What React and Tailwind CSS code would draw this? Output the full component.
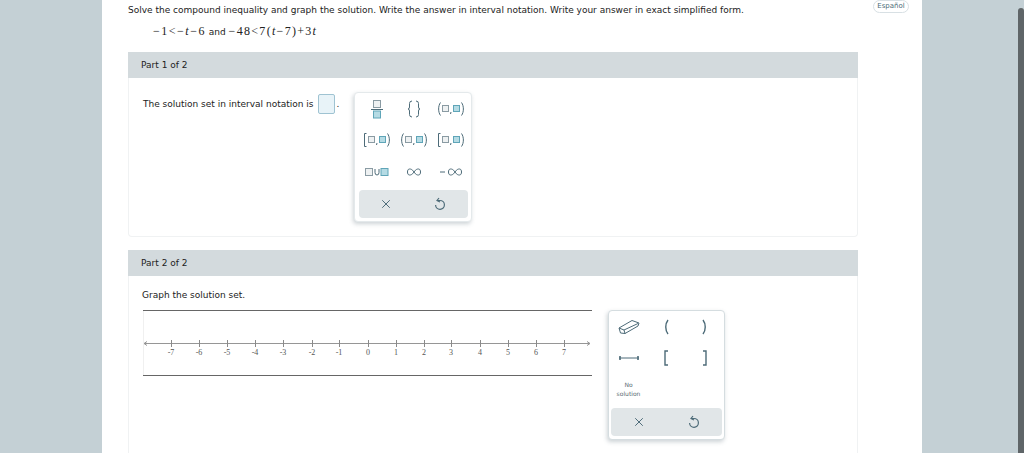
import { X } from 'lucide-react'

const ink = '#4d6b78'

function Box({ x, y, size = 7, fill }) {
  return (
    <rect
      x={x}
      y={y}
      width={size}
      height={size}
      fill={fill ? '#b5dbe4' : '#eef1f2'}
      stroke={fill ? '#5fa5b8' : '#8a9ba3'}
      strokeWidth="1"
    />
  )
}

// bracket pair with two boxes: left and right are the bracket characters
function Interval({ left, right }) {
  const drawSide = (kind, side) => {
    const x = side === 'l' ? 0.5 : 25.5
    const dir = side === 'l' ? 1 : -1
    if (kind === '[') {
      return <path d={`M${x + 2 * dir} 1.5 H${x} V14.5 H${x + 2 * dir}`} fill="none" stroke={ink} strokeWidth="1" />
    }
    return <path d={`M${x + 2 * dir} 1.5 C${x - 0.5 * dir} 5 ${x - 0.5 * dir} 11 ${x + 2 * dir} 14.5`} fill="none" stroke={ink} strokeWidth="1" />
  }
  return (
    <svg width="26" height="16" viewBox="0 0 26 16">
      {drawSide(left, 'l')}
      <Box x={4.5} y={4.5} size={6} />
      <path d="M13 11 L12.5 13" stroke={ink} strokeWidth="1" />
      <Box x={15.5} y={4.5} size={6} fill />
      {drawSide(right, 'r')}
    </svg>
  )
}

function Fraction() {
  return (
    <svg width="14" height="20" viewBox="0 0 14 20">
      <Box x={3.5} y={1.5} size={7} />
      <path d="M1 10.5 H13" stroke={ink} strokeWidth="1" />
      <Box x={3.5} y={12} size={7} fill />
    </svg>
  )
}

function Braces() {
  return (
    <svg width="14" height="18" viewBox="0 0 14 18">
      <path d="M5 1 Q2.5 1 2.5 3.5 V7 Q2.5 9 1 9 Q2.5 9 2.5 11 V14.5 Q2.5 17 5 17" fill="none" stroke={ink} strokeWidth="1" />
      <path d="M9 1 Q11.5 1 11.5 3.5 V7 Q11.5 9 13 9 Q11.5 9 11.5 11 V14.5 Q11.5 17 9 17" fill="none" stroke={ink} strokeWidth="1" />
    </svg>
  )
}

function Union() {
  return (
    <svg width="24" height="10" viewBox="0 0 24 10">
      <Box x={0.5} y={1.5} />
      <path d="M10 2 V5.5 Q10 8 12 8 Q14 8 14 5.5 V2" fill="none" stroke={ink} strokeWidth="1" />
      <Box x={16} y={1.5} fill />
    </svg>
  )
}

function Infinity2({ minus }) {
  return (
    <svg width={minus ? 22 : 14} height="10" viewBox={minus ? '0 0 22 10' : '0 0 14 10'}>
      {minus && <path d="M0 5 H5" stroke={ink} strokeWidth="1" />}
      <path
        transform={minus ? 'translate(8 0)' : undefined}
        d="M7 5 C5 2 3.5 2 2.5 2 C1 2 0.5 3.5 0.5 5 C0.5 6.5 1 8 2.5 8 C3.5 8 5 8 7 5 C9 2 10.5 2 11.5 2 C13 2 13.5 3.5 13.5 5 C13.5 6.5 13 8 11.5 8 C10.5 8 9 8 7 5 Z"
        fill="none"
        stroke={ink}
        strokeWidth="1"
      />
    </svg>
  )
}

function Eraser() {
  return (
    <svg width="22" height="16" viewBox="0 0 22 16">
      <path d="M1 9 L14 1.5 L21 4 L20 7 L7 14.5 L2.5 14 Z M1 9 L6 11 L7 14.5 M6 11 L20 4.5" fill="none" stroke={ink} strokeWidth="1" strokeLinejoin="round" />
    </svg>
  )
}

function Segment() {
  return (
    <svg width="22" height="8" viewBox="0 0 22 8">
      <path d="M1 4 H21" stroke={ink} strokeWidth="1" />
      <path d="M1 2 L3 4 L1 6 M3 2 L1 4 L3 6 M21 2 L19 4 L21 6 M19 2 L21 4 L19 6" fill="none" stroke={ink} strokeWidth="0.8" />
    </svg>
  )
}

function Paren({ kind }) {
  const paths = {
    '(': 'M5 1 C2 5 2 11 5 15',
    ')': 'M1 1 C4 5 4 11 1 15',
    '[': 'M5 1 H2 V15 H5',
    ']': 'M1 1 H4 V15 H1',
  }
  return (
    <svg width="6" height="16" viewBox="0 0 6 16">
      <path d={paths[kind]} fill="none" stroke={ink} strokeWidth="1.4" />
    </svg>
  )
}

function Undo() {
  return (
    <svg width="12" height="14" viewBox="0 0 12 14">
      <path d="M5 1 L3 3.5 L6 5 M3 3.5 H6 A4.4 4.4 0 1 1 1.6 8" fill="none" stroke={ink} strokeWidth="1.2" />
    </svg>
  )
}

function KeyFooter() {
  return (
    <div className="h-7 bg-[#e1e6e8] rounded-sm grid grid-cols-2 items-center justify-items-center text-[#4d6b78]">
      <X size={14} strokeWidth={1.7} />
      <Undo />
    </div>
  )
}

function Cell({ children }) {
  return <div className="h-[31.5px] flex items-center justify-center">{children}</div>
}

function NumberLine() {
  const ticks = [
    [-7, 28], [-6, 56], [-5, 84], [-4, 112], [-3, 140], [-2, 169], [-1, 196], [0, 225],
    [1, 253], [2, 281], [3, 308], [4, 337], [5, 365], [6, 393], [7, 421],
  ]
  return (
    <svg width="449" height="64" viewBox="0 0 449 64" className="block">
      <path d="M0.5 0 V64" stroke="#f0f0f0" strokeWidth="1" />
      <path d="M1 32.5 H447" stroke="#969696" strokeWidth="1" />
      <path d="M4 30.5 L1 32.5 L4 34.5 M444 30.5 L447 32.5 L444 34.5" fill="none" stroke="#969696" strokeWidth="1" />
      {ticks.map(([n, x]) => (
        <g key={n}>
          <path d={`M${x + 0.5} 29 V36`} stroke="#8a8a8a" strokeWidth="1" />
          <text x={x} y={44} textAnchor="middle" fontSize="8" fill="#555" fontFamily="'Liberation Serif', serif">
            {n}
          </text>
        </g>
      ))}
    </svg>
  )
}

function PartHeader({ children }) {
  return (
    <div className="h-[26px] bg-[#d3dadd] pl-[13px] pt-[2px] flex items-center text-[9px] text-[#222]">{children}</div>
  )
}

function Mi({ children }) {
  return <i className="font-['Liberation_Serif',serif] text-[12px]">{children}</i>
}

export default function App() {
  return (
    <div className="h-[453px] overflow-hidden bg-[#c4d0d5] flex font-['DejaVu_Sans',sans-serif] text-[#222]">
      <div className="w-[102px] shrink-0" />
      <main className="w-[820px] shrink-0 bg-white pl-[26px] relative">
        <a className="absolute top-0 right-[13px] w-[36px] h-[13px] text-center rounded-full border border-[#d8e0e4] text-[7px] leading-[11px] font-medium text-[#4d6b78]">
          Español
        </a>
        <p className="pt-[4px] h-[24px] text-[9px] leading-[12px] whitespace-nowrap">
          Solve the compound inequality and graph the solution. Write the answer in interval notation. Write your answer in exact simplified form.
        </p>
        <p className="pl-[25px] h-[28px] text-[9px] leading-[15px] whitespace-nowrap">
          <span className="font-['Liberation_Serif',serif] text-[12px] tracking-[1.5px]">−1&lt;−<Mi>t</Mi>−6</span>
          {' and '}
          <span className="font-['Liberation_Serif',serif] text-[12px] tracking-[1.3px]">−48&lt;7(<Mi>t</Mi>−7)+3<Mi>t</Mi></span>
        </p>

        <section className="w-[730px]">
          <PartHeader>Part 1 of 2</PartHeader>
          <div className="h-[159px] border-x border-b border-[#f0f2f3] rounded-b-sm pl-[14px] pt-[15px] flex items-start">
            <p className="text-[9px] leading-[20px] whitespace-nowrap flex items-center w-[211px] pt-[1px]">
              The solution set in interval notation is
              <span className="inline-block ml-[4px] w-[17px] h-[20px] bg-[#e8f3f8] border border-[#9fc3d2] rounded-[2px]" />
              <span className="ml-[2px]">.</span>
            </p>
            <div className="w-[118px] h-[130px] -mt-[1px] bg-white rounded border border-[#e4e9eb] shadow-[-1px_2px_4px_rgba(90,110,120,0.3)] px-[3.5px]">
              <div className="grid grid-cols-[36px_38px_36px] pb-[2px]">
                <Cell><Fraction /></Cell>
                <Cell><Braces /></Cell>
                <Cell><Interval left="(" right=")" /></Cell>
                <Cell><Interval left="[" right="]" /></Cell>
                <Cell><Interval left="(" right="]" /></Cell>
                <Cell><Interval left="[" right=")" /></Cell>
                <Cell><Union /></Cell>
                <Cell><Infinity2 /></Cell>
                <Cell><Infinity2 minus /></Cell>
              </div>
              <KeyFooter />
            </div>
          </div>
        </section>

        <section className="w-[730px] mt-[13px]">
          <PartHeader>Part 2 of 2</PartHeader>
          <div className="h-[177px] border-x border-[#f0f2f3] pl-[13px] pt-[13px]">
            <p className="text-[9px] leading-[12px] h-[21px]">Graph the solution set.</p>
            <div className="flex items-start">
              <div className="w-[449px] h-[66px] ml-[1px] border-y border-[#666]">
                <NumberLine />
              </div>
              <div className="ml-[16px] w-[117px] h-[130px] bg-white rounded border border-[#d5dde0] shadow-[-1px_2px_4px_rgba(90,110,120,0.3)] px-[2px]">
                <div className="grid grid-cols-[36px_38px_36px] pb-[2px]">
                  <Cell><Eraser /></Cell>
                  <Cell><Paren kind="(" /></Cell>
                  <Cell><span className="ml-[3px] flex"><Paren kind=")" /></span></Cell>
                  <Cell><Segment /></Cell>
                  <Cell><Paren kind="[" /></Cell>
                  <Cell><span className="ml-[3px] flex"><Paren kind="]" /></span></Cell>
                  <Cell>
                    <span className="text-[6px] leading-[9px] text-center text-[#5a6b73] -mt-[2px] -ml-[1px]">No<br />solution</span>
                  </Cell>
                </div>
                <KeyFooter />
              </div>
            </div>
          </div>
        </section>
      </main>
      <div className="flex-1 flex justify-end">
        <div className="w-[6px] h-full bg-[#c4d0d5] pt-[8px]">
          <div className="h-full bg-[#5f6568] rounded-t" />
        </div>
      </div>
    </div>
  )
}
